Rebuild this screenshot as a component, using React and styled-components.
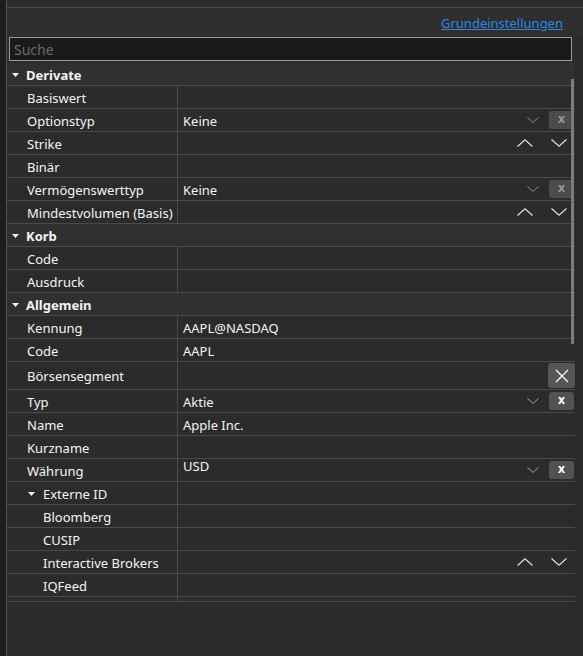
import React from "react";
import styled, { createGlobalStyle } from "styled-components";

const GlobalStyle = createGlobalStyle`
  html, body {
    margin: 0;
    padding: 0;
    background: #2b2b2b;
  }
  body {
    font-family: "Noto Sans", "Open Sans", sans-serif;
    font-size: 13px;
    color: #f4f4f4;
  }
`;

const sections = [
  {
    title: "Derivate",
    rows: [
      { label: "Basiswert" },
      { label: "Optionstyp", value: "Keine", control: "select", muted: true },
      { label: "Strike", control: "spin" },
      { label: "Binär" },
      { label: "Vermögenswerttyp", value: "Keine", control: "select", muted: true },
      { label: "Mindestvolumen (Basis)", control: "spin" },
    ],
  },
  {
    title: "Korb",
    rows: [{ label: "Code" }, { label: "Ausdruck" }],
  },
  {
    title: "Allgemein",
    rows: [
      { label: "Kennung", value: "AAPL@NASDAQ" },
      { label: "Code", value: "AAPL" },
      { label: "Börsensegment", control: "clear", tall: true },
      { label: "Typ", value: "Aktie", control: "select" },
      { label: "Name", value: "Apple Inc." },
      { label: "Kurzname" },
      { label: "Währung", value: "USD", control: "select", valueTop: true },
      { label: "Externe ID", group: true },
      { label: "Bloomberg", level: 2 },
      { label: "CUSIP", level: 2 },
      { label: "Interactive Brokers", level: 2, control: "spin" },
      { label: "IQFeed", level: 2 },
    ],
  },
];

const Caret = () => (
  <svg width="7" height="4" viewBox="0 0 7 4">
    <path d="M0 0 H7 L3.5 4 Z" fill="#f2f2f2" />
  </svg>
);

const Chevron = ({ up, size = 16, color = "#e0e0e0" }) => (
  <svg width={size} height={size / 2} viewBox="0 0 16 8">
    <path
      d={up ? "M0.5 7.5 L8 0.8 L15.5 7.5" : "M0.5 0.5 L8 7.2 L15.5 0.5"}
      fill="none"
      stroke={color}
      strokeWidth="1.2"
    />
  </svg>
);

const BigCross = () => (
  <svg width="14" height="14" viewBox="0 0 14 14">
    <path d="M1 1 L13 13 M13 1 L1 13" stroke="#f4f4f4" strokeWidth="1.4" />
  </svg>
);

const Controls = ({ type, muted }) => {
  if (type === "select") {
    return (
      <Right>
        <DropArrow>
          <Chevron size={12} color={muted ? "#949494" : "#aaaaaa"} />
        </DropArrow>
        <ClearButton muted={muted}>x</ClearButton>
      </Right>
    );
  }
  if (type === "spin") {
    return (
      <Right>
        <SpinPair>
          <Chevron up />
          <Chevron />
        </SpinPair>
      </Right>
    );
  }
  if (type === "clear") {
    return (
      <Right>
        <BigButton>
          <BigCross />
        </BigButton>
      </Right>
    );
  }
  return null;
};

const PropertyRow = ({ row }) => (
  <Row tall={row.tall}>
    <Label level={row.group ? 1 : row.level || 1}>
      {row.group && (
        <GroupCaret>
          <Caret />
        </GroupCaret>
      )}
      <span>{row.label}</span>
    </Label>
    <Value top={row.valueTop}>
      {row.value && <ValueText top={row.valueTop}>{row.value}</ValueText>}
      <Controls type={row.control} muted={row.muted} />
    </Value>
  </Row>
);

const App = () => (
  <>
    <GlobalStyle />
    <Page>
      <SideStrip />
      <Main>
        <TopBar />
        <LinkRow>
          <Link href="#">Grundeinstellungen</Link>
        </LinkRow>
        <Search placeholder="Suche" />
        <Grid>
          {sections.map((section) => (
            <React.Fragment key={section.title}>
              <SectionHeader>
                <Caret />
                <span>{section.title}</span>
              </SectionHeader>
              {section.rows.map((row, i) => (
                <PropertyRow key={section.title + i} row={row} />
              ))}
            </React.Fragment>
          ))}
          <StubRow>
            <div />
            <StubValue />
          </StubRow>
          <Thumb />
        </Grid>
      </Main>
    </Page>
  </>
);

export default App;

const Page = styled.div`
  display: flex;
  width: 583px;
  height: 656px;
  overflow: hidden;
  background: #2b2b2b;
`;

const SideStrip = styled.div`
  width: 6px;
  flex: none;
  background: #1d1d1d;
  border-right: 1px solid #555555;
`;

const Main = styled.div`
  flex: 1;
  display: flex;
  flex-direction: column;
  min-width: 0;
`;

const TopBar = styled.div`
  height: 7px;
  flex: none;
  background: #2b2b2b;
  border-bottom: 1px solid #4c4c4c;
`;

const LinkRow = styled.div`
  height: 29px;
  display: flex;
  align-items: center;
  justify-content: flex-end;
  padding-right: 20px;
  background: #2e2e2e;
`;

const Link = styled.a`
  color: #2b86e8;
  text-decoration: underline;
  font-size: 13px;
  margin-top: 1px;
`;

const Search = styled.input`
  box-sizing: border-box;
  height: 24px;
  margin: 0 11px 0 2px;
  padding: 0 4px;
  background: #1a1a1a;
  border: 1px solid #9c9c9c;
  outline: none;
  color: #f2f2f2;
  font-family: inherit;
  font-size: 14px;

  &::placeholder {
    color: #6c6c6c;
  }
`;

const Grid = styled.div`
  position: relative;
  margin: 2px 8px 0 0;
  background: #2b2b2b;
`;

const SectionHeader = styled.div`
  box-sizing: border-box;
  height: 23px;
  display: flex;
  align-items: center;
  gap: 7px;
  padding: 1px 0 0 5px;
  font-weight: 700;
  background: #303030;
  border-bottom: 1px solid #4a4a4a;

  svg {
    margin-top: 1px;
  }
`;

const Row = styled.div`
  box-sizing: border-box;
  display: grid;
  grid-template-columns: 170px 1fr;
  height: ${(p) => (p.tall ? 28 : 23)}px;
  border-bottom: 1px solid #4a4a4a;
`;

const Label = styled.div`
  display: flex;
  align-items: center;
  padding: 1px 0 0 ${(p) => (p.level === 2 ? 36 : 20)}px;
  white-space: nowrap;
  overflow: hidden;
`;

const GroupCaret = styled.span`
  display: flex;
  width: 7px;
  margin: 0 8px 0 1px;
`;

const Value = styled.div`
  display: flex;
  align-items: ${(p) => (p.top ? "flex-start" : "center")};
  border-left: 1px solid #4a4a4a;
  padding: 1px 0 0 5px;
  min-width: 0;
`;

const ValueText = styled.span`
  line-height: ${(p) => (p.top ? "12px" : "normal")};
`;

const Right = styled.div`
  margin-left: auto;
  display: flex;
  align-items: center;
  align-self: center;
  margin-top: -1px;
`;

const DropArrow = styled.span`
  display: flex;
  margin-right: 10px;
`;

const ClearButton = styled.span`
  width: 25px;
  height: 18px;
  margin-right: 1px;
  border-radius: 3px;
  background: ${(p) => (p.muted ? "#4b4b4b" : "#525252")};
  color: ${(p) => (p.muted ? "#999999" : "#ffffff")};
  font-weight: 700;
  font-size: 12px;
  line-height: 16px;
  text-align: center;
`;

const SpinPair = styled.span`
  display: flex;
  gap: 18px;
  margin-right: 8px;
`;

const BigButton = styled.span`
  width: 27px;
  height: 25px;
  display: flex;
  align-items: center;
  justify-content: center;
  border-radius: 3px;
  background: #565656;
`;

const StubRow = styled.div`
  display: grid;
  grid-template-columns: 170px 1fr;
  height: 4px;
  border-bottom: 1px solid #4a4a4a;
`;

const StubValue = styled.div`
  border-left: 1px solid #4a4a4a;
`;

const Thumb = styled.div`
  position: absolute;
  right: 1px;
  top: 16px;
  width: 3px;
  height: 265px;
  background: #7c7c7c;
`;
